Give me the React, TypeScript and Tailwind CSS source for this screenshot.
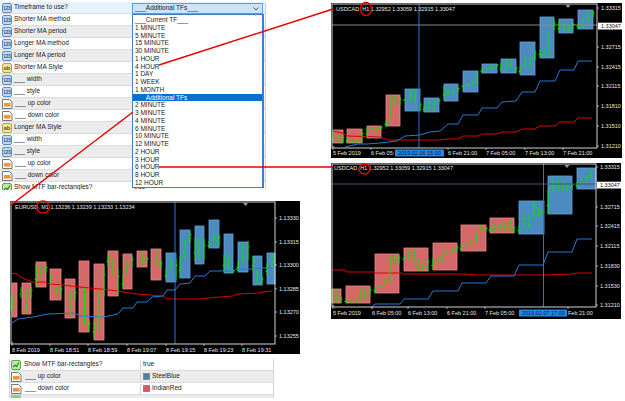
import React from 'react';

type Label = [string, number];
type Rect = [number, number, number, number];
type Bar = [number, number, number];

interface ChartProps {
  box: Rect; // x, y, w, h on the page
  frame: Rect; // left, top, right, bottom
  header: string;
  headerY: number;
  headerX: number;
  yLabels: Label[];
  xLabels: Label[];
  xY: number;
  red: Rect[];
  blue: Rect[];
  bars: Bar[];
  blueLine: string;
  redLine: string;
  crossX: number;
  triX: number;
  crossY?: number;
  crossYColor?: string;
  price?: [number, string];
  date?: [number, number, string];
}

const COLOR = { green: '#00e600', blue: '#2379d6', red: '#dc0000', steel: '#4d8abf', indian: '#d46868' };

function Chart(p: ChartProps) {
  const [x, y, w, h] = p.box;
  const [l, t, r, b] = p.frame;
  const barPath = p.bars
    .map(([bx, y1, y2]) => {
      const tl = y1 + (y2 - y1) * 0.65;
      const tr = y1 + (y2 - y1) * 0.3;
      return `M${bx} ${y1}V${y2}M${bx - 1.6} ${tl}H${bx}M${bx} ${tr}H${bx + 1.6}`;
    })
    .join('');

  return (
    <svg width={w} height={h} viewBox={`${x} ${y} ${w} ${h}`} className="block shrink-0 bg-black text-[5.5px]">
      {p.red.map(([x1, x2, y1, y2], i) => (
        <rect key={i} x={x1} y={y1} width={x2 - x1} height={y2 - y1} fill={COLOR.indian} stroke="#e58a8a" strokeWidth={0.8} />
      ))}
      {p.blue.map(([x1, x2, y1, y2], i) => (
        <rect key={i} x={x1} y={y1} width={x2 - x1} height={y2 - y1} fill={COLOR.steel} stroke="#62a2da" strokeWidth={0.8} />
      ))}
      <polyline points={p.redLine} fill="none" stroke={COLOR.red} strokeWidth={1} />
      <polyline points={p.blueLine} fill="none" stroke={COLOR.blue} strokeWidth={1} />
      <path d={barPath} fill="none" stroke={COLOR.green} strokeWidth={0.9} />
      {p.crossY !== undefined && (
        <line x1={l} x2={r} y1={p.crossY} y2={p.crossY} stroke={p.crossYColor} strokeWidth={1} />
      )}
      <line x1={p.crossX} x2={p.crossX} y1={t} y2={b} stroke={COLOR.blue} strokeWidth={1} />
      <rect x={l} y={t} width={r - l} height={b - t} fill="none" stroke="#e8e8e8" strokeWidth={0.9} />
      <polygon points={`${p.triX - 2.5},${t + 1} ${p.triX + 2.5},${t + 1} ${p.triX},${t + 4}`} fill="#9a9a9a" />
      <polygon points={`${l + 0.5},${b - 3} ${l + 3},${b - 0.5} ${l + 0.5},${b - 0.5}`} fill="#9a9a9a" />
      <text x={p.headerX} y={p.headerY + 2} fill="#e8e8e8">{p.header}</text>
      {p.yLabels.map(([s, ly]) => (
        <g key={s}>
          <line x1={r} x2={r + 2} y1={ly} y2={ly} stroke="#e8e8e8" strokeWidth={0.7} />
          <text x={r + 4} y={ly + 2} fill="#e8e8e8">{s}</text>
        </g>
      ))}
      {p.xLabels.map(([s, lx]) => (
        <g key={s}>
          <line x1={lx} x2={lx} y1={b} y2={b + 2} stroke="#e8e8e8" strokeWidth={0.7} />
          <text x={lx} y={p.xY + 2} fill="#e8e8e8">{s}</text>
        </g>
      ))}
      {p.price && (
        <g>
          <rect x={r + 1} y={p.price[0] - 3.3} width={24.5} height={6.8} fill="#fff" />
          <text x={r + 4} y={p.price[0] + 2} fill="#111">{p.price[1]}</text>
        </g>
      )}
      {p.date && (
        <g>
          <rect x={p.date[0]} y={p.xY - 3.5} width={p.date[1] - p.date[0]} height={7} fill="#1e88f0" />
          <text x={p.date[0] + 3} y={p.xY + 2} fill="#0b1a2b">{p.date[2]}</text>
        </g>
      )}
    </svg>
  );
}

function NumIcon() {
  return (
    <svg width={10} height={10} viewBox="0 0 10 10" className="shrink-0">
      <rect x={0.5} y={0.5} width={9} height={9} rx={1.5} fill="#c4daf0" stroke="#5c8fc4" />
      <text x={5} y={7} textAnchor="middle" fontSize={4.6} fontWeight={700} fill="#1f4f8a">123</text>
    </svg>
  );
}

function TextIcon() {
  return (
    <svg width={10} height={10} viewBox="0 0 10 10" className="shrink-0">
      <rect x={0.5} y={0.5} width={9} height={9} rx={1.5} fill="#f3e39c" stroke="#b8a24c" />
      <text x={5} y={7} textAnchor="middle" fontSize={6} fontWeight={700} fill="#6a5a18">ab</text>
    </svg>
  );
}

function ColorIcon() {
  return (
    <svg width={11} height={10} viewBox="0 0 11 10" className="shrink-0">
      <path d="M0.5 0.5H7.5L10 3V9.5H0.5Z" fill="#fff" stroke="#777" />
      <rect x={2} y={4} width={6.5} height={2.4} fill="#f39a1e" />
      <rect x={2} y={6.4} width={6.5} height={1} fill="#e2503a" />
    </svg>
  );
}

function BoolIcon() {
  return (
    <svg width={10} height={10} viewBox="0 0 10 10" className="shrink-0">
      <rect x={0.5} y={0.5} width={9} height={9} rx={1.5} fill="#bfe8ae" stroke="#5aa845" />
      <path d="M2 7L4 5L5.5 6.5L8 2.5" fill="none" stroke="#2c8a22" strokeWidth={1.2} />
    </svg>
  );
}

const ICONS = { num: NumIcon, text: TextIcon, color: ColorIcon, bool: BoolIcon };
type IconName = keyof typeof ICONS;

const topRows: [IconName, string][] = [
  ['num', 'Timeframe to use?'],
  ['num', 'Shorter MA method'],
  ['num', 'Shorter MA period'],
  ['num', 'Longer MA method'],
  ['num', 'Longer MA period'],
  ['text', 'Shorter MA Style'],
  ['num', '___ width'],
  ['num', '___ style'],
  ['color', '___ up color'],
  ['color', '___ down color'],
  ['text', 'Longer MA Style'],
  ['num', '___ width'],
  ['num', '___ style'],
  ['color', '___ up color'],
  ['color', '___ down color'],
  ['bool', 'Show MTF bar-rectangles?'],
];

const tfItems = [
  '___Current TF___', '1 MINUTE', '5 MINUTE', '15 MINUTE', '30 MINUTE', '1 HOUR', '4 HOUR', '1 DAY', '1 WEEK', '1 MONTH',
  '___Additional TFs___', '2 MINUTE', '3 MINUTE', '4 MINUTE', '6 MINUTE', '10 MINUTE', '12 MINUTE', '2 HOUR', '3 HOUR',
  '6 HOUR', '8 HOUR', '12 HOUR',
];

function PropertyTable() {
  return (
    <div className="relative h-[188px] w-[266px] shrink-0 overflow-hidden border-r border-[#d4d4d4]">
      {topRows.map(([icon, name], i) => {
        const Icon = ICONS[icon];
        return (
          <div
            key={i}
            className={`flex h-[12px] items-center border-b border-[#dcdcdc] ${
              i === 0 ? 'bg-[#e5f1fb]' : i % 2 === 0 ? 'bg-[#ececec]' : 'bg-white'
            }`}
          >
            <div className="flex w-[132px] items-center gap-[2px] pl-[2px]">
              <Icon />
              <span className="whitespace-pre">{name}</span>
            </div>
            {i === 15 && <span className="pl-[2px]">true</span>}
          </div>
        );
      })}
      <div className="absolute left-[132px] top-[1px] flex h-[11px] w-[131px] items-center justify-between border border-[#569de5] bg-[#cce4f7] pl-[2px] pr-[3px]">
        <span>___Additional TFs___</span>
        <svg width={6} height={4} viewBox="0 0 6 4">
          <path d="M0.5 0.5L3 3L5.5 0.5" fill="none" stroke="#444" strokeWidth={0.9} />
        </svg>
      </div>
      <div className="absolute left-[132px] top-[12px] h-[174px] w-[132px] border border-[#3d7fc4] border-r-2 bg-white pt-[1px]">
        {tfItems.map((item, i) => (
          <div
            key={i}
            className={`h-[7.75px] whitespace-pre pl-[2px] leading-[7.75px] ${i === 10 ? 'bg-[#0a70d0] text-white' : ''}`}
          >
            {item}
          </div>
        ))}
      </div>
    </div>
  );
}

function BottomTable() {
  const rows: [IconName, string, string, string?][] = [
    ['bool', 'Show MTF bar-rectangles?', 'true'],
    ['color', '___ up color', 'SteelBlue', 'bg-[#4682b4]'],
    ['color', '___ down color', 'IndianRed', 'bg-[#cd5c5c]'],
  ];
  return (
    <div className="ml-[9px] mt-[5px] w-[265px] overflow-hidden border-x border-[#d4d4d4]">
      {rows.map(([icon, name, value, swatch], i) => {
        const Icon = ICONS[icon];
        return (
          <div key={i} className={`flex h-[12px] items-center border-b border-[#dcdcdc] ${i === 1 ? 'bg-[#ececec]' : 'bg-white'}`}>
            <div className="flex w-[131px] items-center gap-[3px] border-r border-[#d4d4d4] pl-[1px]">
              <Icon />
              <span className="whitespace-pre">{name}</span>
            </div>
            <div className="flex items-center gap-[2px] pl-[2px]">
              {swatch && <span className={`h-[7px] w-[7px] border border-[#888] ${swatch}`} />}
              <span>{value}</span>
            </div>
          </div>
        );
      })}
      <div className="h-[3px] bg-[#ececec] pl-[1px]">
        <div className="h-[3px] w-[10px] bg-[#8fd07a]" />
      </div>
    </div>
  );
}

const eurusd: ChartProps = {
  box: [10, 201, 290, 153],
  frame: [11, 202, 275, 344],
  header: 'EURUSD, M1 1.13236 1.13239 1.13233 1.13234',
  headerX: 15,
  headerY: 207,
  yLabels: [['1.13330', 218], ['1.13315', 242], ['1.13300', 265], ['1.13285', 289], ['1.13270', 312], ['1.13255', 336]],
  xLabels: [['8 Feb 2019', 12], ['8 Feb 18:51', 50], ['8 Feb 18:59', 88], ['8 Feb 19:07', 127], ['8 Feb 19:15', 166], ['8 Feb 19:23', 204], ['8 Feb 19:31', 242]],
  xY: 350,
  red: [
    [12, 17, 283, 317], [22, 31, 283, 314], [36, 46, 262, 287], [50, 61, 269, 300], [65, 75, 279, 318],
    [79, 89, 261, 332], [94, 104, 264, 340], [108, 118, 251, 296], [123, 132, 254, 289], [137, 147, 251, 267], [151, 161, 249, 280],
  ],
  blue: [
    [166, 176, 253, 282], [180, 190, 230, 278], [195, 204, 226, 264], [209, 219, 220, 248],
    [224, 233, 234, 273], [238, 248, 242, 272], [253, 262, 256, 285], [267, 275, 253, 284],
  ],
  bars: [
    [12, 295, 313], [21, 287, 298], [27, 288, 313], [31, 287, 298], [36, 265, 287], [41, 264, 278], [46, 265, 273], [51, 273, 285],
    [56, 285, 295], [61, 285, 298], [70, 291, 315], [75, 289, 301], [84.5, 288, 325], [89, 320, 332], [94, 321, 338], [99, 291, 330],
    [104, 266, 296], [108, 253, 266], [113, 258, 276], [118, 268, 296], [123, 275, 289], [127, 261, 276], [132, 256, 268], [142, 252, 266],
    [147, 257, 263], [157, 250, 268], [161, 260, 270], [166, 268, 280], [171, 259, 270], [176, 259, 280], [180, 256, 278], [185, 240, 258],
    [190, 231, 243], [195, 238, 261], [199, 237, 260], [204, 239, 260], [209, 241, 248], [214, 234, 243], [219, 234, 246], [224, 255, 271],
    [228, 254, 270], [233, 270, 273], [238, 261, 271], [243, 244, 263], [248, 241, 260], [253, 256, 271], [257, 270, 285], [262, 276, 285],
    [267, 263, 276], [272, 253, 268],
  ],
  blueLine: '12,323 18,319 33,317 48,314 75,313 80,316 103,317 118,314 123,308 133,308 137,302 147,302 152,297 163,296 167,290 175,290 180,284 190,283 195,276 205,276 210,271 233,271 237,269 253,269 263,268 272,268',
  redLine: '12,273 17,274 22,278 33,282 45,282 50,284 62,285 80,287 100,289 118,291 123,292 137,294 150,295 163,296 167,299 200,299 207,298 233,296 237,294 260,293 263,292 272,291',
  crossX: 175,
  triX: 245.5,
};

const usdcadTop: ChartProps = {
  box: [331, 3, 291, 155],
  frame: [332, 4, 597, 148],
  header: 'USDCAD, H1 1.32952 1.33059 1.32915 1.33047',
  headerX: 336,
  headerY: 9,
  yLabels: [['1.33315', 8], ['1.32715', 47], ['1.32415', 67], ['1.32115', 86], ['1.31810', 106], ['1.31510', 126], ['1.31210', 146]],
  xLabels: [['5 Feb 2019', 333], ['6 Feb 05:', 371], ['6 Feb 21:00', 448], ['7 Feb 05:00', 486], ['7 Feb 13:00', 525], ['7 Feb 21:00', 563]],
  xY: 153,
  red: [[333, 343, 130, 143], [347, 362, 129, 143], [367, 381, 126, 138], [386, 400, 95, 126]],
  blue: [
    [405, 420, 89, 111], [424, 439, 98, 112], [444, 458, 84, 101], [463, 478, 71, 92], [482, 497, 64, 73],
    [501, 516, 59, 73], [520, 535, 42, 75], [540, 554, 17, 58], [559, 573, 19, 33], [578, 593, 10, 29],
  ],
  bars: [
    [333, 132, 143], [338, 133, 143], [343, 135, 143], [347, 137, 143], [352, 140, 143], [357, 140, 143], [362, 130, 143], [367, 128, 137],
    [372, 127, 130], [377, 127, 134], [381, 126, 130], [386, 120, 127], [391, 96, 122], [395, 96, 105], [400, 97, 105], [405, 99, 101],
    [410, 90, 101], [415, 89, 103], [420, 102, 111], [424, 105, 112], [429, 99, 111], [434, 98, 111], [439, 99, 103], [444, 86, 100],
    [448, 90, 95], [453, 90, 94], [458, 87, 92], [463, 85, 87], [468, 83, 87], [473, 81, 85], [477, 72, 83], [482, 68, 73], [487, 68, 71],
    [492, 65, 70], [497, 64, 67], [501, 63, 72], [506, 60, 72], [511, 59, 68], [516, 66, 73], [520, 67, 74], [525, 56, 68], [530, 57, 69],
    [535, 50, 60], [540, 50, 57], [544, 49, 57], [549, 30, 57], [554, 20, 30], [559, 20, 33], [564, 22, 32], [569, 26, 32], [573, 22, 30],
    [578, 23, 29], [583, 19, 29], [588, 12, 22], [593, 11, 17],
  ],
  blueLine: '345,147 358,144 367,144 380,143 397,141 405,136 420,135 430,132 440,131 448,124 458,124 463,115 478,115 482,108 497,108 502,102 516,101 522,92 535,92 540,81 555,81 560,70 574,70 578,61 592,61',
  redLine: '333,131 342,133 348,136 380,137 388,140 438,140 448,139 458,139 463,136 478,136 482,134 497,134 502,132 516,132 522,129 535,129 540,126 555,126 560,122 574,122 578,118 592,118',
  crossX: 419,
  triX: 568,
  crossY: 25,
  crossYColor: '#8a8a8a',
  price: [26, '1.33047'],
  date: [395, 444, '2019.02.06 15:00'],
};

const usdcadBottom: ChartProps = {
  box: [331, 163, 290, 156],
  frame: [332, 164, 596, 307],
  header: 'USDCAD, H1 1.32952 1.33059 1.32915 1.33047',
  headerX: 334,
  headerY: 168,
  yLabels: [['1.33315', 167], ['1.32715', 207], ['1.32415', 226], ['1.32115', 246], ['1.31830', 266], ['1.31530', 286], ['1.31210', 305]],
  xLabels: [['5 Feb 2019', 333], ['6 Feb 05:00', 372], ['6 Feb 13:00', 408], ['6 Feb 21:00', 447], ['7 Feb 05:00', 485], ['Feb 21:00', 568]],
  xY: 313,
  red: [[332, 341, 289, 303], [346, 370, 286, 303], [375, 399, 254, 293], [404, 428, 248, 271], [433, 457, 243, 270], [461, 486, 225, 251], [490, 514, 218, 233]],
  blue: [[519, 544, 201, 234], [548, 572, 176, 214], [577, 596, 168, 189]],
  bars: [
    [332, 290, 303], [336, 290, 303], [341, 297, 303], [346, 299, 303], [351, 300, 303], [356, 299, 303], [360, 289, 302], [365, 288, 302],
    [370, 287, 297], [375, 287, 293], [380, 286, 288], [385, 278, 286], [390, 255, 283], [394, 254, 263], [399, 255, 264], [404, 258, 260],
    [409, 249, 261], [414, 248, 263], [418, 258, 271], [423, 264, 271], [428, 258, 271], [433, 257, 270], [438, 258, 263], [442, 253, 261],
    [447, 250, 255], [452, 248, 254], [457, 245, 252], [461, 245, 251], [466, 243, 246], [471, 240, 245], [476, 231, 243], [481, 225, 232],
    [486, 227, 231], [490, 227, 232], [495, 223, 231], [500, 223, 231], [505, 221, 231], [510, 219, 231], [514, 225, 233], [519, 225, 234],
    [524, 215, 228], [529, 216, 228], [534, 201, 219], [539, 208, 218], [543, 210, 214], [548, 190, 214], [553, 177, 192], [558, 179, 191],
    [563, 180, 191], [567, 185, 191], [572, 183, 190], [577, 182, 188], [582, 179, 186], [587, 175, 181], [591, 169, 179],
  ],
  blueLine: '371,308 375,304 400,304 404,299 428,299 433,291 458,291 462,283 486,283 491,276 514,276 519,265 543,265 548,252 572,252 577,239 592,239',
  redLine: '332,270 344,270 346,272 373,272 376,273 401,273 404,274 461,274 480,275 544,275 572,274 577,273 592,273',
  crossX: 543.5,
  triX: 567,
  crossY: 184,
  crossYColor: '#4a5566',
  price: [185, '1.33047'],
  date: [519, 567, '2019.02.07 17:00'],
};

export default function App() {
  return (
    <div className="relative flex h-[401px] w-[625px] overflow-hidden bg-white font-['Liberation_Sans',sans-serif] text-[6.5px] leading-none text-[#222]">
      <div className="w-[331px] shrink-0 pt-[2px]">
        <PropertyTable />
        <div className="ml-[10px] mt-[11px]">
          <Chart {...eurusd} />
        </div>
        <BottomTable />
      </div>
      <div className="flex flex-col gap-[5px] pt-[3px]">
        <Chart {...usdcadTop} />
        <Chart {...usdcadBottom} />
      </div>
      {/* red call-outs drawn over the collage */}
      <svg width={625} height={401} className="pointer-events-none absolute left-0 top-0" fill="none" stroke="#e60000" strokeWidth={1.5}>
        <line x1={159} y1={65} x2={333} y2={9} />
        <line x1={159} y1={167} x2={333} y2={167} />
        <line x1={133} y1={112} x2={11} y2={205} />
        <ellipse cx={43} cy={207} rx={6.5} ry={6} />
        <ellipse cx={366} cy={9} rx={5.5} ry={6.5} />
        <ellipse cx={364.5} cy={169} rx={5.5} ry={5} />
      </svg>
    </div>
  );
}
